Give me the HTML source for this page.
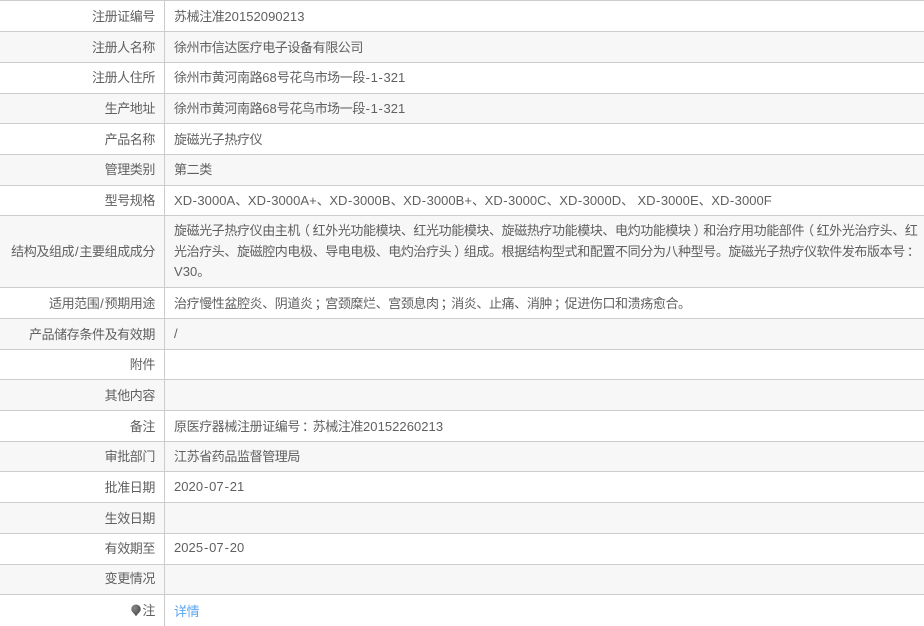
<!DOCTYPE html>
<html lang="zh-CN">
<head>
<meta charset="utf-8">
<title>注册证详情</title>
<style>
html,body{margin:0;padding:0;background:#fff}
body{width:924px;height:626px;overflow:hidden;position:relative;font-family:"Liberation Sans","Noto Sans CJK SC",sans-serif;font-size:13px;color:#606060;letter-spacing:-.4px}
.r{position:absolute;left:0;width:924px;box-sizing:border-box;border-top:1px solid #ccc}
.g{background:#f7f7f7}
.l{position:absolute;left:0;top:0;bottom:0;width:165px;box-sizing:border-box;padding-right:9px;border-right:1px solid #ccc;display:flex;align-items:center;justify-content:flex-end;white-space:nowrap}
.v{position:absolute;left:174px;top:0;bottom:0;width:746px;display:flex;align-items:center;white-space:nowrap}
.r>div>div{position:relative;top:-1px}
.k>div>div{top:-2px}
.r>.m{display:block;top:5px;line-height:20.5px}
.r>.m>div{top:0}
b{font-weight:normal;letter-spacing:.05px}
u{text-decoration:none;letter-spacing:0;padding:0 .65px}
.x u{padding:0 .45px}
.d u{padding:0 .85px}
.sl{letter-spacing:0;padding:0 .8px}
.p,.q,.c{position:relative}
.p{left:-3px}
.q{left:3px}
.c{left:2px}
.r>div>.lk{top:0}
a{color:#5ba4f0;text-decoration:none}
svg{vertical-align:-2px;margin-right:1px}
</style>
</head>
<body>
<div class="r" style="top:0;height:31px"><div class="l"><div>注册证编号</div></div><div class="v"><div>苏械注准<b>20152090213</b></div></div></div>
<div class="r g" style="top:31px;height:31px"><div class="l"><div>注册人名称</div></div><div class="v"><div>徐州市信达医疗电子设备有限公司</div></div></div>
<div class="r k" style="top:62px;height:31px"><div class="l"><div>注册人住所</div></div><div class="v"><div>徐州市黄河南路<b>68</b>号花鸟市场一段<b><u>-</u>1<u>-</u>321</b></div></div></div>
<div class="r g" style="top:93px;height:30px"><div class="l"><div>生产地址</div></div><div class="v"><div>徐州市黄河南路<b>68</b>号花鸟市场一段<b><u>-</u>1<u>-</u>321</b></div></div></div>
<div class="r" style="top:123px;height:31px"><div class="l"><div>产品名称</div></div><div class="v"><div>旋磁光子热疗仪</div></div></div>
<div class="r g k" style="top:154px;height:31px"><div class="l"><div>管理类别</div></div><div class="v"><div>第二类</div></div></div>
<div class="r" style="top:185px;height:30px"><div class="l"><div>型号规格</div></div><div class="v x"><div><b>XD<u>-</u>3000A</b>、<b>XD<u>-</u>3000A+</b>、<b>XD<u>-</u>3000B</b>、<b>XD<u>-</u>3000B+</b>、<b>XD<u>-</u>3000C</b>、<b>XD<u>-</u>3000D</b>、<b> XD<u>-</u>3000E</b>、<b>XD<u>-</u>3000F</b></div></div></div>
<div class="r g" style="top:215px;height:72px"><div class="l"><div>结构及组成<b class="sl">/</b>主要组成成分</div></div><div class="v m"><div>旋磁光子热疗仪由主机<span class="p">（</span>红外光功能模块、红光功能模块、旋磁热疗功能模块、电灼功能模块<span class="q">）</span>和治疗用功能部件<span class="p">（</span>红外光治疗头、红<br>光治疗头、旋磁腔内电极、导电电极、电灼治疗头<span class="q">）</span>组成。根据结构型式和配置不同分为八种型号。旋磁光子热疗仪软件发布版本号<span class="c">：</span><br><b>V30</b>。</div></div></div>
<div class="r" style="top:287px;height:31px"><div class="l"><div>适用范围<b class="sl">/</b>预期用途</div></div><div class="v"><div>治疗慢性盆腔炎、阴道炎<span class="c">；</span>宫颈糜烂、宫颈息肉<span class="c">；</span>消炎、止痛、消肿<span class="c">；</span>促进伤口和溃疡愈合。</div></div></div>
<div class="r g" style="top:318px;height:31px"><div class="l"><div>产品储存条件及有效期</div></div><div class="v"><div><b>/</b></div></div></div>
<div class="r" style="top:349px;height:30px"><div class="l"><div>附件</div></div><div class="v"></div></div>
<div class="r g" style="top:379px;height:31px"><div class="l"><div>其他内容</div></div><div class="v"></div></div>
<div class="r" style="top:410px;height:31px"><div class="l"><div>备注</div></div><div class="v"><div>原医疗器械注册证编号<span class="c">：</span>苏械注准<b>20152260213</b></div></div></div>
<div class="r g" style="top:441px;height:30px"><div class="l"><div>审批部门</div></div><div class="v"><div>江苏省药品监督管理局</div></div></div>
<div class="r" style="top:471px;height:31px"><div class="l"><div>批准日期</div></div><div class="v d"><div><b>2020<u>-</u>07<u>-</u>21</b></div></div></div>
<div class="r g" style="top:502px;height:31px"><div class="l"><div>生效日期</div></div><div class="v"></div></div>
<div class="r k" style="top:533px;height:31px"><div class="l"><div>有效期至</div></div><div class="v d"><div><b>2025<u>-</u>07<u>-</u>20</b></div></div></div>
<div class="r g k" style="top:564px;height:30px"><div class="l"><div>变更情况</div></div><div class="v"></div></div>
<div class="r" style="top:594px;height:32px"><div class="l"><div><svg width="10" height="13" viewBox="0 0 10 13"><defs><radialGradient id="bulb" cx=".35" cy=".3" r=".8"><stop offset="0" stop-color="#888"/><stop offset="1" stop-color="#444"/></radialGradient></defs><path d="M5 .5a4.700 4.700 0 0 1 4.700 4.700c0 2.200-1.800 3.400-3.400 5.300L5.300 12H4.700L3.700 10.500C2.300 8.600.3 7.400.3 5.200A4.700 4.700 0 0 1 5 .5z" fill="url(#bulb)"/></svg>注</div></div><div class="v"><div class="lk"><a href="#">详情</a></div></div></div>
</body>
</html>
